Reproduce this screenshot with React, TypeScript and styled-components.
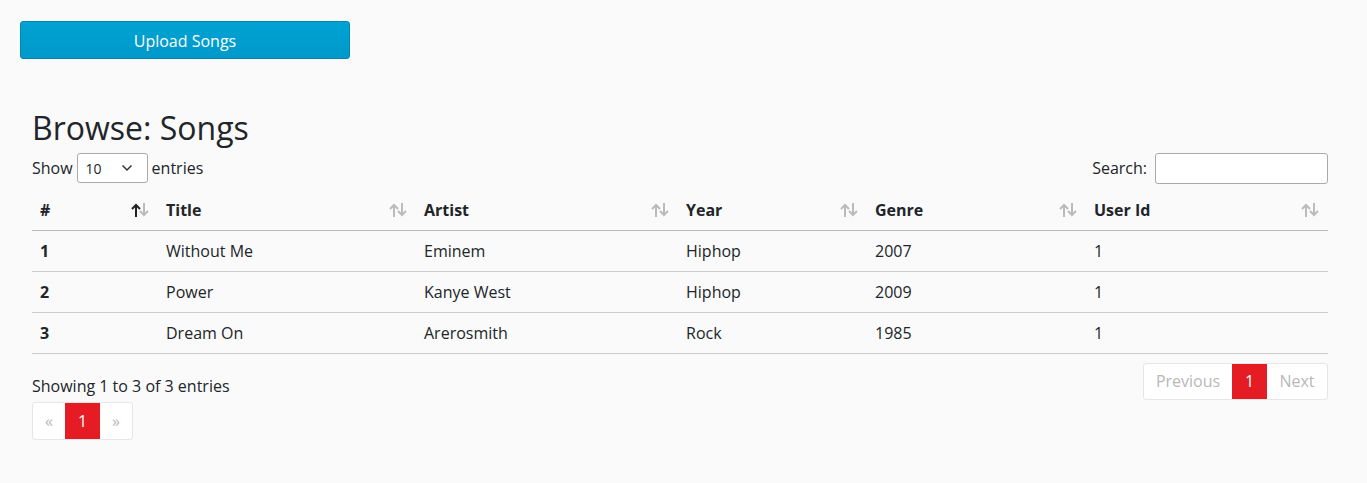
import React from "react";
import styled, { createGlobalStyle } from "styled-components";

const Global = createGlobalStyle`
  html, body { margin: 0; padding: 0; background: #fafafa; }
  body { font-family: "Open Sans", "Noto Sans", sans-serif; color: #212529; font-size: 16px; }
  * { box-sizing: border-box; }
`;

const Page = styled.div`
  padding: 21px 39px 40px 20px;
`;

const UploadButton = styled.button`
  display: block;
  width: 330px;
  height: 38px;
  border: 1px solid #0086b3;
  border-radius: 3px;
  background: linear-gradient(#00a3d3, #0099ca);
  color: #fff;
  font-family: inherit;
  font-size: 16px;
  padding: 1px 0 0;
`;

const Section = styled.div`
  margin: 49px 0 0 12px;
`;

const Heading = styled.h2`
  margin: 0;
  font-size: 32px;
  font-weight: 400;
  line-height: 40px;
  color: #212529;
`;

const Controls = styled.div`
  display: flex;
  justify-content: space-between;
  align-items: center;
  height: 30px;
  margin-top: 5px;
`;

const Label = styled.label`
  display: flex;
  align-items: center;
  gap: 4px;
`;

const SelectBox = styled.div`
  width: 71px;
  height: 30px;
  border: 1px solid #aaa;
  border-radius: 3px;
  background: #fff;
  display: flex;
  align-items: center;
  justify-content: space-between;
  padding: 0 14px 0 8px;
  font-size: 14px;
`;

const SearchInput = styled.input`
  width: 173px;
  height: 31px;
  border: 1px solid #aaa;
  border-radius: 3px;
  background: #fff;
  margin-left: 4px;
`;

const Table = styled.table`
  width: 100%;
  border-collapse: collapse;
  margin-top: 7px;
`;

const Th = styled.th<{ $w: number }>`
  width: ${(p) => p.$w}px;
  text-align: left;
  font-weight: 700;
  height: 40px;
  padding: 0 8px;
  border-bottom: 1px solid #bbb;
  position: relative;
`;

const SortIcon = styled.span`
  position: absolute;
  right: 9px;
  top: 12px;
  display: flex;
`;

const Td = styled.td<{ $bold?: boolean }>`
  height: 41px;
  padding: 0 8px;
  border-bottom: 1px solid #ccc;
  font-weight: ${(p) => (p.$bold ? 700 : 400)};
`;

const Footer = styled.div`
  display: flex;
  justify-content: space-between;
  align-items: flex-start;
  margin-top: 9px;
`;

const Info = styled.div`
  padding-top: 12px;
  line-height: 22px;
  margin-bottom: 5px;
`;

const Pager = styled.div<{ $h: number }>`
  display: flex;
  height: ${(p) => p.$h}px;
  border: 1px solid #e6e6e6;
  border-radius: 3px;
  background: #fff;
  width: max-content;
`;

const PageItem = styled.span<{ $active?: boolean; $w: number }>`
  width: ${(p) => p.$w}px;
  display: flex;
  align-items: center;
  justify-content: center;
  color: ${(p) => (p.$active ? "#fff" : "#b8b8b8")};
  background: ${(p) => (p.$active ? "#e51c23" : "transparent")};
  font-size: 16px;
`;

const Arrows = ({ active }: { active?: boolean }) => (
  <svg width="18" height="16" viewBox="0 0 18 16">
    <g fill="none" strokeWidth="2" strokeLinecap="butt">
      <g stroke={active ? "#222" : "#bbb"}>
        <path d="M5 15V3" />
        <path d="M1 7l4-4 4 4" />
      </g>
      <g stroke="#bbb">
        <path d="M13 1v12" />
        <path d="M9 9l4 4 4-4" />
      </g>
    </g>
  </svg>
);

const Chevron = () => (
  <svg width="12" height="8" viewBox="0 0 12 8">
    <path d="M1.5 1.5L6 6l4.5-4.5" fill="none" stroke="#333" strokeWidth="1.5" />
  </svg>
);

const cols = [
  { name: "#", w: 126 },
  { name: "Title", w: 258 },
  { name: "Artist", w: 262 },
  { name: "Year", w: 189 },
  { name: "Genre", w: 219 },
  { name: "User Id", w: 242 },
];

const rows = [
  ["1", "Without Me", "Eminem", "Hiphop", "2007", "1"],
  ["2", "Power", "Kanye West", "Hiphop", "2009", "1"],
  ["3", "Dream On", "Arerosmith", "Rock", "1985", "1"],
];

export default function App() {
  return (
    <Page>
      <Global />
      <UploadButton>Upload Songs</UploadButton>
      <Section>
        <Heading>Browse: Songs</Heading>
        <Controls>
          <Label>
            Show
            <SelectBox>
              <span>10</span>
              <Chevron />
            </SelectBox>
            entries
          </Label>
          <Label>
            Search:
            <SearchInput />
          </Label>
        </Controls>
        <Table>
          <thead>
            <tr>
              {cols.map((c, i) => (
                <Th key={c.name} $w={c.w}>
                  {c.name}
                  <SortIcon>
                    <Arrows active={i === 0} />
                  </SortIcon>
                </Th>
              ))}
            </tr>
          </thead>
          <tbody>
            {rows.map((r) => (
              <tr key={r[0]}>
                {r.map((v, i) => (
                  <Td key={i} $bold={i === 0}>
                    {v}
                  </Td>
                ))}
              </tr>
            ))}
          </tbody>
        </Table>
        <Footer>
          <div>
            <Info>Showing 1 to 3 of 3 entries</Info>
            <Pager $h={38}>
              <PageItem $w={32}>«</PageItem>
              <PageItem $w={35} $active>1</PageItem>
              <PageItem $w={32}>»</PageItem>
            </Pager>
          </div>
          <Pager $h={37}>
            <PageItem $w={88}>Previous</PageItem>
            <PageItem $w={35} $active>1</PageItem>
            <PageItem $w={60}>Next</PageItem>
          </Pager>
        </Footer>
      </Section>
    </Page>
  );
}
